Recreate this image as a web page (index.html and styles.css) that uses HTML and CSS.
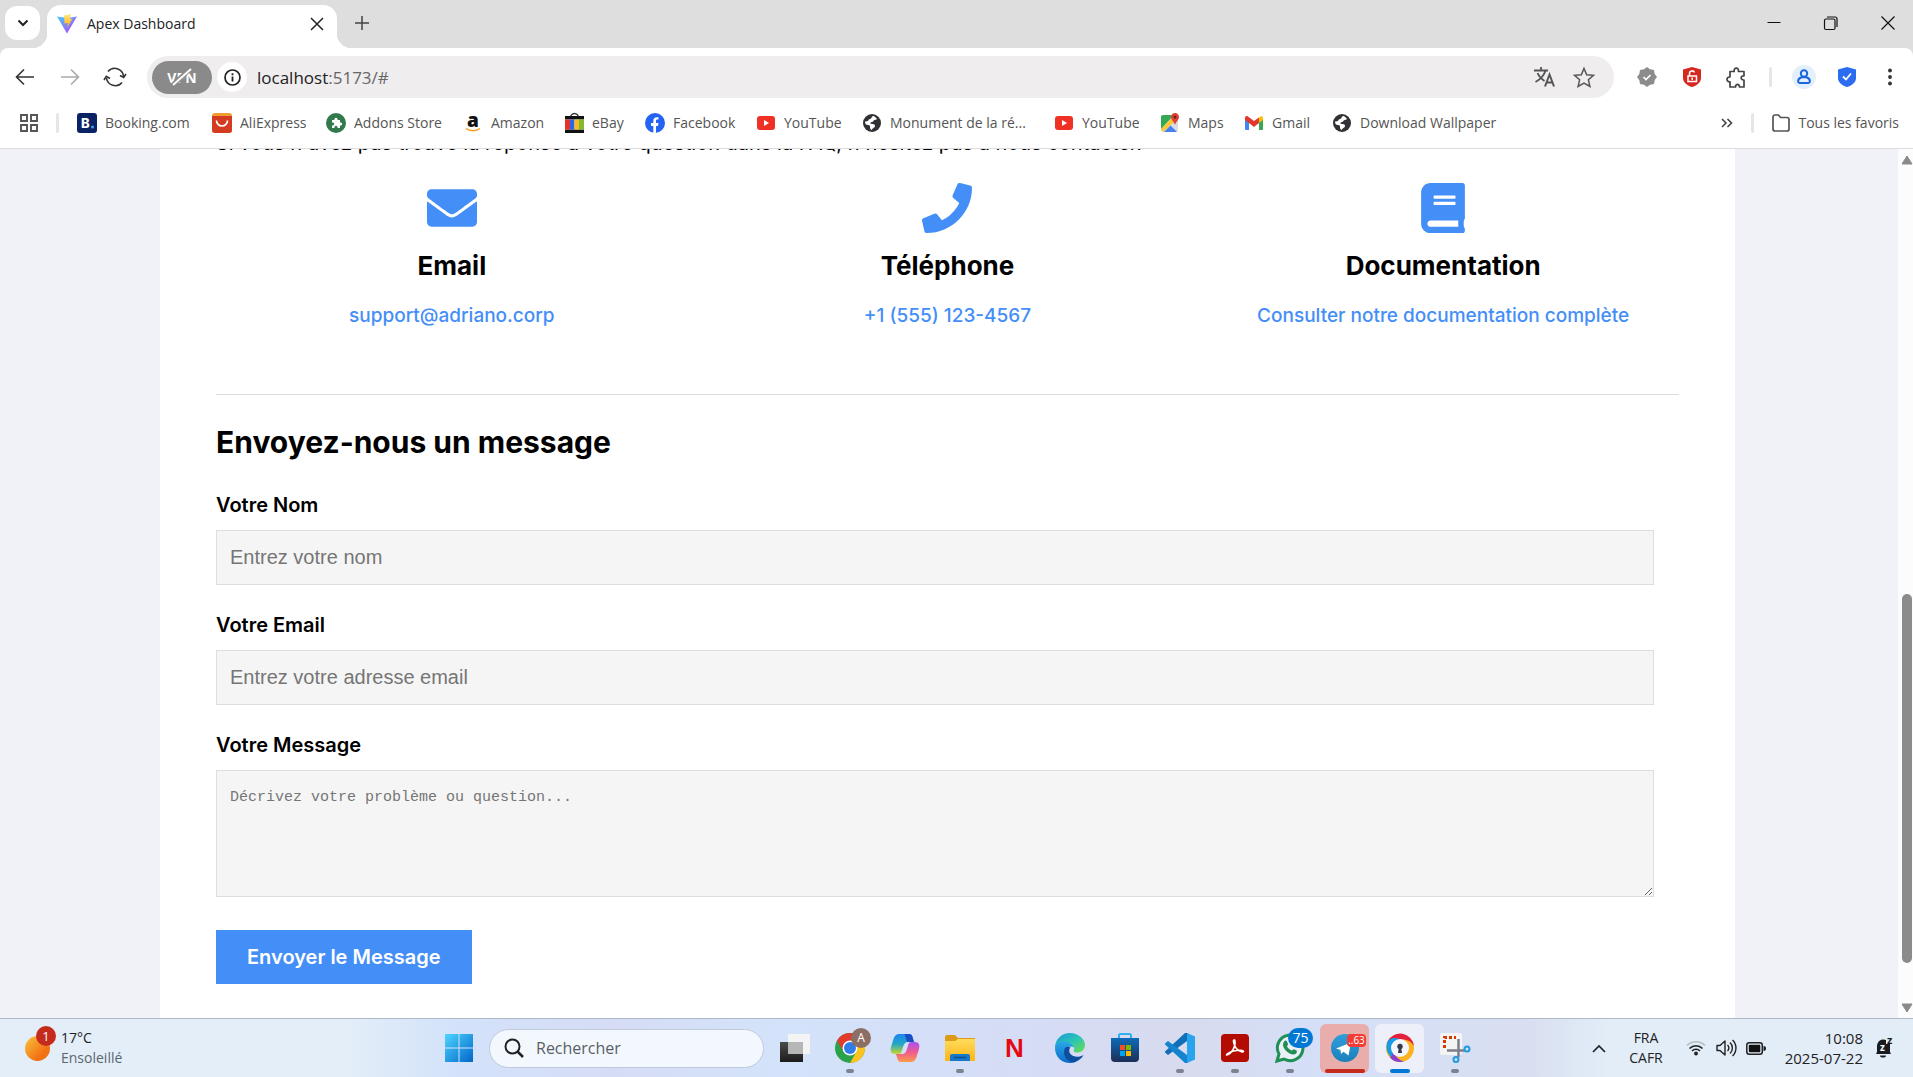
FILE: index.html
```html
<!DOCTYPE html>
<html lang="fr">
<head>
<meta charset="utf-8">
<title>Apex Dashboard</title>
<link rel="stylesheet" href="styles.css">
</head>
<body>
<svg class="defs" width="0" height="0" aria-hidden="true">
  <defs>
    <linearGradient id="vite" x1="0" y1="0" x2="1" y2="1"><stop offset="0" stop-color="#41d1ff"/><stop offset="1" stop-color="#bd34fe"/></linearGradient>
    <linearGradient id="bolt" x1="0" y1="0" x2="0" y2="1"><stop offset="0" stop-color="#ffea83"/><stop offset="1" stop-color="#ffa800"/></linearGradient>
    <linearGradient id="win" x1="0" y1="0" x2="1" y2="1"><stop offset="0" stop-color="#4fd4ff"/><stop offset="1" stop-color="#0067c9"/></linearGradient>
    <linearGradient id="sun" x1="0" y1="0" x2="1" y2="1"><stop offset="0" stop-color="#f8c53a"/><stop offset=".7" stop-color="#f37215"/></linearGradient>
    <linearGradient id="dark" x1="0" y1="0" x2="0" y2="1"><stop offset="0" stop-color="#4a4a4a"/><stop offset="1" stop-color="#1c1c1c"/></linearGradient>
    <linearGradient id="folder" x1="0" y1="0" x2="0" y2="1"><stop offset="0" stop-color="#ffdc5c"/><stop offset="1" stop-color="#fbb616"/></linearGradient>
    <linearGradient id="copA" x1="0" y1="0" x2="0" y2="1"><stop offset="0" stop-color="#1f86f0"/><stop offset=".5" stop-color="#21a6c8"/><stop offset="1" stop-color="#c8d82a"/></linearGradient>
    <linearGradient id="copB" x1="0" y1="0" x2="0" y2="1"><stop offset="0" stop-color="#a552f4"/><stop offset=".5" stop-color="#f05a8e"/><stop offset="1" stop-color="#fb9a4a"/></linearGradient>
    <linearGradient id="edgeTop" x1="0" y1="0" x2="1" y2="1"><stop offset="0" stop-color="#1897d8"/><stop offset=".5" stop-color="#2bc3b8"/><stop offset="1" stop-color="#6be14a"/></linearGradient>
    <linearGradient id="edgeLow" x1="0" y1="0" x2="0" y2="1"><stop offset="0" stop-color="#2aa8e8"/><stop offset="1" stop-color="#0b6cc8"/></linearGradient>
    <linearGradient id="store" x1="0" y1="0" x2="0" y2="1"><stop offset="0" stop-color="#0f6ab8"/><stop offset="1" stop-color="#1c2f57"/></linearGradient>
    <linearGradient id="tele" x1="0" y1="0" x2="0" y2="1"><stop offset="0" stop-color="#2f9fdc"/><stop offset="1" stop-color="#1a80bb"/></linearGradient>
    <symbol id="i-youtube" viewBox="0 0 20 20"><rect x="1" y="3" width="18" height="14" rx="3" fill="#ee3124"/><path d="M8 7l5 3-5 3z" fill="#fff"/></symbol>
    <symbol id="i-globe" viewBox="0 0 20 20"><circle cx="10" cy="10" r="9" fill="#303135"/><path d="M11 3c-2 1-1 2.500-3 3-2 .3-1 2-3 2.200L3 8.500C3 11 4 12 6 12c2 0 2 1 2 2s0 2.500 2 3c0-2 3-2 3-4s-2-2-4-2.200c-1.500-.3 0-1.800 1-1.800 1.500 0 1-1.500 2.500-2 1.500-.5 1.500 0 2.500-1C14 4.500 12.500 3.200 11 3z" fill="#fff"/></symbol>
  </defs>
</svg>

<header class="browser">
  <div class="tabstrip">
    <button class="tab-search" aria-label="Rechercher dans les onglets"><svg width="12" height="8" viewBox="0 0 12 8"><path d="M1.500 1.500L6 6l4.500-4.500" fill="none" stroke="#222" stroke-width="2"/></svg></button>
    <div class="tab">
      <svg width="20" height="20" viewBox="0 0 20 20"><path d="M0 2.500L10 19.500 20 2.500 11 4z" fill="url(#vite)"/><path d="M7 1.500L14 0l-1 5 2.500-.3L10 14l.8-5L7.500 9.500z" fill="url(#bolt)"/></svg>
      <span class="tab-title">Apex Dashboard</span>
      <button class="bare" aria-label="Fermer l'onglet"><svg width="14" height="14" viewBox="0 0 14 14"><path d="M1 1l12 12M13 1L1 13" stroke="#222" stroke-width="1.500"/></svg></button>
    </div>
    <button class="bare new-tab" aria-label="Nouvel onglet"><svg width="14" height="14" viewBox="0 0 14 14"><path d="M7 0v14M0 7h14" stroke="#444" stroke-width="1.500"/></svg></button>
    <div class="window-controls">
      <button class="bare" aria-label="Réduire"><svg width="14" height="14" viewBox="0 0 14 14"><path d="M.5 6.500h13" stroke="#111"/></svg></button>
      <button class="bare" aria-label="Restaurer"><svg width="14" height="14" viewBox="0 0 14 14"><rect x=".5" y="3" width="10.500" height="10.500" rx="1.500" fill="none" stroke="#111" stroke-width="1.200"/><path d="M3 1h8a2 2 0 0 1 2 2v8" fill="none" stroke="#111" stroke-width="1.200"/></svg></button>
      <button class="bare" aria-label="Fermer"><svg width="14" height="14" viewBox="0 0 14 14"><path d="M.5.5l13 13M13.500.5l-13 13" stroke="#111" stroke-width="1.200"/></svg></button>
    </div>
  </div>

  <div class="toolbar">
    <button class="bare tool" aria-label="Retour"><svg width="20" height="18" viewBox="0 0 20 18"><path d="M19 9H2M9 1.500L1.500 9 9 16.500" fill="none" stroke="#333" stroke-width="1.600"/></svg></button>
    <button class="bare tool" aria-label="Suivant"><svg width="20" height="18" viewBox="0 0 20 18"><path d="M1 9h17M11 1.500L18.500 9 11 16.500" fill="none" stroke="#aaa" stroke-width="1.600"/></svg></button>
    <button class="bare tool" aria-label="Actualiser"><svg width="24" height="20" viewBox="0 0 24 20"><path d="M5 4.500A8.800 8.800 0 0 1 20.500 9M3.500 11A8.800 8.800 0 0 0 19 15.500" fill="none" stroke="#333" stroke-width="1.600"/><path d="M17 8.500l3.700 2L23 7M1 13l2.300-3.700L7 11.500" fill="none" stroke="#333" stroke-width="1.600"/></svg></button>
    <div class="address">
      <button class="vpn" aria-label="VPN désactivé">VPN<svg class="vpn-slash" width="22" height="20" viewBox="0 0 22 20"><path d="M2 18L19 2" stroke="#8a8a8a" stroke-width="5"/><path d="M2 18L20 2" stroke="#fff" stroke-width="2"/></svg></button>
      <button class="site-info" aria-label="Informations sur le site"><svg width="17" height="17" viewBox="0 0 17 17"><circle cx="8.500" cy="8.500" r="7.500" fill="none" stroke="#222" stroke-width="1.700"/><path d="M8.500 7.500v5M8.500 4.300v1.900" stroke="#222" stroke-width="1.800"/></svg></button>
      <span class="url">localhost<span class="url-rest">:5173/#</span></span>
      <button class="bare tool-tight" aria-label="Traduire"><svg width="21" height="20" viewBox="0 0 21 20"><path d="M0 3.500h14M7 0v3.500M11.500 3.500C10 9 6 12.500 1.500 15M3.500 6c1.500 3.500 4 6 7 8" fill="none" stroke="#555" stroke-width="1.800"/><path d="M11 19.500l4.500-12 4.500 12M12.500 15.500h6" fill="none" stroke="#555" stroke-width="2"/></svg></button>
      <button class="bare tool-tight" aria-label="Ajouter aux favoris"><svg width="22" height="21" viewBox="0 0 22 21"><path d="M11 1.500l2.700 6.200 6.800.6-5.100 4.500 1.500 6.600L11 16l-5.900 3.400 1.500-6.600L1.500 8.300l6.800-.6z" fill="none" stroke="#555" stroke-width="1.500"/></svg></button>
    </div>
    <button class="bare tool" aria-label="Extension vérifiée"><svg width="20" height="20" viewBox="0 0 20 20"><path d="M10 0l3 2.300L17 3l.7 4L20 10l-2.300 3-.7 4-4 .7L10 20l-3-2.300L3 17l-.7-4L0 10l2.300-3L3 3l4-.7z" fill="#8c8c8c"/><path d="M6.500 10l2.500 2.500L13.500 8" fill="none" stroke="#fff" stroke-width="1.700"/></svg></button>
    <button class="bare tool" aria-label="Bloqueur"><svg width="18" height="20" viewBox="0 0 18 20"><path d="M9 0l9 2.500V11c0 4.500-4.500 7.800-9 9-4.500-1.200-9-4.500-9-9V2.500z" fill="#d5281f"/><rect x="5" y="9" width="8.500" height="5.500" fill="none" stroke="#fff" stroke-width="1.500"/><path d="M6.500 9V6.500a2.600 2.600 0 0 1 5-1M9.200 10.500v2.500" fill="none" stroke="#fff" stroke-width="1.500"/></svg></button>
    <button class="bare tool" aria-label="Extensions"><svg width="21" height="21" viewBox="0 0 21 21"><path d="M4 4.500h4.200c-1-4.500 5.200-4.500 4.200 0H18v4.300c-3.800-.4-3.800 4.500 0 4.200V20h-4.500c.3-3.400-4.200-3.400-4 0H4v-5.200C0 15 0 9.800 4 10z" fill="none" stroke="#444" stroke-width="1.700" stroke-linejoin="round"/></svg></button>
    <span class="divider"></span>
    <button class="bare tool" aria-label="Profil"><svg width="24" height="24" viewBox="0 0 24 24"><circle cx="12" cy="12" r="12" fill="#e4effc"/><circle cx="12" cy="8.500" r="3.200" fill="none" stroke="#1a66e0" stroke-width="2"/><path d="M9.500 12.200C5 14 5.500 18 8 18h8c2.500 0 3-4-1.500-5.800z" fill="none" stroke="#1a66e0" stroke-width="2"/></svg></button>
    <button class="bare tool" aria-label="Protection"><svg width="18" height="20" viewBox="0 0 18 20"><path d="M9 0l9 2.500V11c0 4.500-4.500 7.800-9 9-4.500-1.200-9-4.500-9-9V2.500z" fill="#2b6cf0"/><path d="M5 9.500l3 3L13 6.500" fill="none" stroke="#fff" stroke-width="1.800"/></svg></button>
    <button class="bare tool" aria-label="Menu"><svg width="4" height="18" viewBox="0 0 4 18"><g fill="#333"><circle cx="2" cy="2.500" r="1.900"/><circle cx="2" cy="9" r="1.900"/><circle cx="2" cy="15.500" r="1.900"/></g></svg></button>
  </div>

  <nav class="bookmarks">
    <button class="bare apps" aria-label="Applications"><svg width="18" height="18" viewBox="0 0 18 18"><path d="M1 1h6v6H1zM11 1h6v6h-6zM1 11h6v6H1zM11 11h6v6h-6z" fill="none" stroke="#555" stroke-width="1.900"/></svg></button>
    <span class="divider"></span>
    <div class="bookmark-list">
      <a href="#"><svg width="20" height="20" viewBox="0 0 20 20"><rect width="20" height="20" rx="3" fill="#0b2265"/><text x="4" y="15" font-family="Inter" font-weight="800" font-size="13" fill="#fff">B</text><circle cx="15.500" cy="14" r="1.500" fill="#3aa5f0"/></svg>Booking.com</a>
      <a href="#"><svg width="20" height="20" viewBox="0 0 20 20"><rect width="20" height="20" rx="3" fill="#f29b30"/><path d="M0 3h20v14a3 3 0 0 1-3 3H3a3 3 0 0 1-3-3z" fill="#d43c22"/><path d="M4.500 7.500a5.500 5.500 0 0 0 11 0" fill="none" stroke="#fff" stroke-width="1.700"/></svg>AliExpress</a>
      <a href="#"><svg width="20" height="20" viewBox="0 0 20 20"><circle cx="10" cy="10" r="10" fill="#327a4b"/><path d="M6 7h2.500a1.600 1.600 0 1 1 3 0H14v2.500a1.600 1.600 0 1 1 0 3V15h-2.500a1.600 1.600 0 1 0-3 0H6v-2.500a1.600 1.600 0 1 0 0-3z" fill="#fff"/></svg>Addons Store</a>
      <a href="#"><svg width="18" height="20" viewBox="0 0 18 20"><text x="2" y="14" font-family="Open Sans" font-weight="800" font-size="19" fill="#111">a</text><path d="M1 15.500c4 3 10 3 14 0" fill="none" stroke="#f79a1e" stroke-width="1.500"/></svg>Amazon</a>
      <a href="#"><svg width="19" height="20" viewBox="0 0 19 20"><path d="M5.500 5a4 4.500 0 0 1 8 0" fill="none" stroke="#333" stroke-width="1.500"/><path d="M0 3h19v3.500H0zM0 16.500h19V20H0z" fill="#111"/><path d="M0 6.500h5v10H0z" fill="#e1322c"/><path d="M5 6.500h4.500v10H5z" fill="#2a66e0"/><path d="M9.500 6.500H14v10H9.500z" fill="#f7b926"/><path d="M14 6.500h5v10h-5z" fill="#86b92e"/></svg>eBay</a>
      <a href="#"><svg width="20" height="20" viewBox="0 0 20 20"><circle cx="10" cy="10" r="10" fill="#2563f4"/><path d="M8.300 20v-7H6v-3h2.300V8c0-2.600 1.400-3.800 3.500-3.800.9 0 1.700.1 1.700.1v2.300h-1.200c-1 0-1.300.6-1.300 1.300V10h2.500l-.5 3h-2v7z" fill="#fff"/></svg>Facebook</a>
      <a href="#"><svg width="20" height="20"><use href="#i-youtube"/></svg>YouTube</a>
      <a href="#"><svg width="20" height="20"><use href="#i-globe"/></svg>Monument de la ré...</a>
      <a href="#"><svg width="20" height="20"><use href="#i-youtube"/></svg>YouTube</a>
      <a href="#"><svg width="20" height="20" viewBox="0 0 20 20"><rect x="1" y="2" width="17" height="17" rx="2" fill="#d9dde3"/><path d="M1 4a2 2 0 0 1 2-2h11L1 16z" fill="#36a853"/><path d="M1 16L13 4l2 4L3 19z" fill="#fcc934"/><path d="M4 19l6.500-6.500L17 19z" fill="#4680f0"/><path d="M15 0c-2.500 0-4 1.800-4 4 0 3 3 4.500 4 8 1-3.500 4-5 4-8 0-2.200-1.500-4-4-4z" fill="#dc4436"/><circle cx="15" cy="4" r="1.500" fill="#7c1a14"/></svg>Maps</a>
      <a href="#"><svg width="20" height="20" viewBox="0 0 20 20"><path d="M1 6l4 3v8H2a1 1 0 0 1-1-1z" fill="#4285f4"/><path d="M19 6l-4 3v8h3a1 1 0 0 0 1-1z" fill="#34a853"/><path d="M15 4.500l1.500-1C18 3 19 4 19 5v2l-4 3z" fill="#fbbc04"/><path d="M1 7V5c0-1.500 1.500-2.500 3-1.500L10 8l5-3.500V10l-5 4-5-4z" fill="#e0382c"/></svg>Gmail</a>
      <a href="#"><svg width="20" height="20"><use href="#i-globe"/></svg>Download Wallpaper</a>
    </div>
    <button class="bare" aria-label="Autres favoris"><svg width="12" height="10" viewBox="0 0 12 10"><path d="M1 1l4 4-4 4M6.500 1l4 4-4 4" fill="none" stroke="#444" stroke-width="1.600"/></svg></button>
    <span class="divider"></span>
    <a class="all-bookmarks" href="#"><svg width="18" height="18" viewBox="0 0 18 18"><path d="M1 3a2 2 0 0 1 2-2h3.500l2 2.500H15a2 2 0 0 1 2 2V15a2 2 0 0 1-2 2H3a2 2 0 0 1-2-2z" fill="none" stroke="#555" stroke-width="1.700"/></svg>Tous les favoris</a>
  </nav>
</header>

<div class="viewport">
  <main class="page">
    <section class="card">
      <p class="intro">Si vous n'avez pas trouvé la réponse à votre question dans la FAQ, n'hésitez pas à nous contacter.</p>
      <div class="contacts">
        <div class="contact">
          <svg width="50" height="50" viewBox="0 0 512 512"><path d="M502.300 190.800c3.900-3.100 9.700-.2 9.700 4.700V400c0 26.500-21.500 48-48 48H48c-26.500 0-48-21.500-48-48V195.600c0-5 5.700-7.800 9.700-4.700 22.400 17.400 52.100 39.500 154.100 113.600 21.100 15.400 56.700 47.800 92.200 47.600 35.700.3 72-32.800 92.300-47.600 102-74.100 131.600-96.300 154-113.700zM256 320c23.200.4 56.600-29.200 73.400-41.400 132.700-96.300 142.800-104.700 173.400-128.700 5.800-4.500 9.200-11.500 9.200-18.900v-19c0-26.500-21.500-48-48-48H48c-26.500 0-48 21.500-48 48v19c0 7.400 3.400 14.300 9.200 18.900 30.600 23.900 40.700 32.400 173.400 128.700 16.800 12.200 50.200 41.800 73.400 41.400z"/></svg>
          <h3>Email</h3>
          <a href="mailto:support@adriano.corp">support@adriano.corp</a>
        </div>
        <div class="contact">
          <svg width="50" height="50" viewBox="0 0 512 512"><path d="M493.400 24.600l-104-24c-11.300-2.600-22.900 3.300-27.500 13.900l-48 112c-4.200 9.800-1.400 21.300 6.900 28l60.600 49.600c-36 76.700-98.900 140.500-177.200 177.200l-49.600-60.600c-6.800-8.300-18.200-11.100-28-6.900l-112 48C3.900 366.500-2 378.100.6 389.400l24 104C27.100 504.200 36.700 512 48 512c256.100 0 464-207.500 464-464 0-11.200-7.700-20.900-18.600-23.400z"/></svg>
          <h3>Téléphone</h3>
          <a href="tel:+15551234567">+1 (555) 123-4567</a>
        </div>
        <div class="contact">
          <svg width="44" height="50" viewBox="0 0 448 512"><path d="M448 360V24c0-13.300-10.700-24-24-24H96C43 0 0 43 0 96v320c0 53 43 96 96 96h328c13.300 0 24-10.700 24-24v-16c0-7.500-3.500-14.300-8.900-18.700-4.200-15.400-4.200-59.300 0-74.700 5.400-4.300 8.900-11.100 8.900-18.600zM128 134c0-3.300 2.700-6 6-6h212c3.300 0 6 2.700 6 6v20c0 3.300-2.700 6-6 6H134c-3.300 0-6-2.700-6-6v-20zm0 64c0-3.300 2.700-6 6-6h212c3.300 0 6 2.700 6 6v20c0 3.300-2.700 6-6 6H134c-3.300 0-6-2.700-6-6v-20zm253.400 250H96c-17.700 0-32-14.300-32-32 0-17.600 14.400-32 32-32h285.400c-1.900 17.100-1.900 46.900 0 64z"/></svg>
          <h3>Documentation</h3>
          <a href="#">Consulter notre documentation complète</a>
        </div>
      </div>
      <form class="message-form">
        <h2>Envoyez-nous un message</h2>
        <div class="field">
          <label for="name">Votre Nom</label>
          <input id="name" type="text" placeholder="Entrez votre nom">
        </div>
        <div class="field">
          <label for="email">Votre Email</label>
          <input id="email" type="email" placeholder="Entrez votre adresse email">
        </div>
        <div class="field">
          <label for="message">Votre Message</label>
          <textarea id="message" placeholder="Décrivez votre problème ou question..."></textarea>
        </div>
        <button class="submit" type="button">Envoyer le Message</button>
      </form>
    </section>
  </main>
  <div class="scrollbar" aria-hidden="true">
    <svg width="12" height="10" viewBox="0 0 12 10"><path d="M6 1l5 8H1z" fill="#8a8a8a" stroke="#8a8a8a" stroke-linejoin="round"/></svg>
    <span class="track-above"></span>
    <span class="thumb"></span>
    <span class="track-below"></span>
    <svg width="12" height="10" viewBox="0 0 12 10"><path d="M6 9L1 1h10z" fill="#8a8a8a" stroke="#8a8a8a" stroke-linejoin="round"/></svg>
  </div>
</div>

<footer class="taskbar">
  <div class="weather">
    <span class="weather-icon"><svg width="25" height="25" viewBox="0 0 25 25"><circle cx="12.500" cy="12.500" r="12.500" fill="url(#sun)"/></svg><span class="weather-badge">1</span></span>
    <div class="two-lines"><span>17°C</span><span class="muted">Ensoleillé</span></div>
  </div>
  <div class="task-center">
    <button class="bare app" aria-label="Démarrer"><svg width="30" height="30" viewBox="0 0 30 30"><path d="M1 1h13.500v13.500H1zM15.500 1H29v13.500H15.500zM1 15.500h13.500V29H1zM15.500 15.500H29V29H15.500z" fill="url(#win)"/></svg></button>
    <label class="search">
      <svg width="20" height="20" viewBox="0 0 20 20"><circle cx="8.500" cy="8.500" r="7" fill="none" stroke="#222" stroke-width="2"/><path d="M13.500 13.500L19 19" stroke="#222" stroke-width="2.500"/></svg>
      <input type="text" placeholder="Rechercher" aria-label="Rechercher">
    </label>
    <button class="bare app" aria-label="Vue des tâches"><svg width="30" height="30" viewBox="0 0 30 30"><path d="M0 9h23v20H0z" fill="url(#dark)"/><path d="M8 1h22v20H8z" fill="#f4f4f4"/><path d="M8 9h15v12H8z" fill="#b6b6b6"/></svg></button>
    <button class="bare app running" aria-label="Chrome"><svg width="30" height="30" viewBox="0 0 30 30"><circle cx="15" cy="15" r="15" fill="#2ba24c"/><path d="M2 7.500A15 15 0 0 1 28 7.500H15l-6.500 11z" fill="#e33b2e"/><path d="M28 7.500A15 15 0 0 1 15 30l6.500-11.500V7.500z" fill="#fcc31e"/><circle cx="15" cy="15" r="7.500" fill="#fff"/><circle cx="15" cy="15" r="6" fill="#2f7de9"/></svg><span class="badge avatar">A</span></button>
    <button class="bare app" aria-label="Copilot"><svg width="30" height="28" viewBox="0 0 30 28"><path d="M15 0h4c2 0 3 1 3.500 3L24 8h-6c-3 0-4 2-5 5l-1.500 5c-1 2-2 2-4 2H5C1 20 0 17 1 13L3.500 5C4.500 2 6 0 10 0z" fill="url(#copA)"/><path d="M14 0h5c2 0 3 1 3.500 3L24 8h-7l-1.500-5C15 1 15 0 14 0z" fill="#1a4fc4"/><path d="M15 28h-4c-2 0-3-1-3.500-3L6 20h6c3 0 4-2 5-5l1.500-5c1-2 2-2 4-2H25c4 0 5 3 4 7l-2.500 8c-1 3-2.500 5-6.500 5z" fill="url(#copB)"/></svg></button>
    <button class="bare app running" aria-label="Explorateur"><svg width="30" height="27" viewBox="0 0 30 27"><path d="M0 2a2 2 0 0 1 2-2h8l3 3h17v6H0z" fill="#dd9a14"/><path d="M0 6h10l3-2h17v22H0z" fill="url(#folder)"/><path d="M5 26v-5a2 2 0 0 1 2-2h16a2 2 0 0 1 2 2v5z" fill="#1678c8"/><path d="M9 22.500h12" stroke="#0b4f90" stroke-width="1.500"/></svg></button>
    <button class="bare app" aria-label="Netflix"><span class="netflix">N</span></button>
    <button class="bare app" aria-label="Edge"><svg width="30" height="30" viewBox="0 0 30 30"><path d="M0 15C0 6 7 0 15 0s15 6 15 12c0 5-4 7.500-8 7.500-3 0-4-1-3-2.500 1-2-1-5-4-5C9 12 4 10 0 15z" fill="url(#edgeTop)"/><path d="M0 15c0-4 4-6.500 9-6.500 5 0 9 3 9.500 6-4-3-8 1-7 6 .8 4.500 5 8 10 7.500C19 29.500 17 30 15 30 7 30 0 24 0 15z" fill="url(#edgeLow)"/><path d="M10 15c-3 6 1 14 9 14.500C24 28 27 25 28.500 22c-4 2.500-10 2.500-13-1-2-2.500-1.500-5 0-6.500-2-1-4-1-5.500.5z" fill="#0d4f9e"/></svg></button>
    <button class="bare app" aria-label="Store"><svg width="30" height="30" viewBox="0 0 30 30"><path d="M9 6V2.500a1.500 1.500 0 0 1 1.500-1.500h9A1.500 1.500 0 0 1 21 2.500V6" fill="none" stroke="#2cb0f0" stroke-width="2"/><path d="M1 5h28v20a4 4 0 0 1-4 4H5a4 4 0 0 1-4-4z" fill="url(#store)"/><path d="M10 12h5v5h-5z" fill="#f25022"/><path d="M16 12h5v5h-5z" fill="#7fba00"/><path d="M10 18h5v5h-5z" fill="#00a4ef"/><path d="M16 18h5v5h-5z" fill="#ffb900"/></svg></button>
    <button class="bare app running" aria-label="VS Code"><svg width="30" height="30" viewBox="0 0 30 30"><path d="M22 8L3 22 0 19.500 0 18.500 20 0 23 0z" fill="#0f6fb8"/><path d="M22 22L3 8 0 10.500 0 11.500 20 30 23 30z" fill="#1484cf"/><path d="M22 0l8 3.500v23L22 30z" fill="#28a4ef"/></svg></button>
    <button class="bare app running" aria-label="Acrobat"><svg width="28" height="28" viewBox="0 0 28 28"><rect width="28" height="28" rx="4" fill="#b30b00"/><path d="M6 21c4-1 9-8 8-14-.3-2-2-1.500-1.500 1C13.500 13 17 17 21 18c2 .3 2-1.500 0-1.600-4-.2-10 .6-14 3-1.500.9-2 1.700-1 1.600z" fill="none" stroke="#fff" stroke-width="1.500"/></svg></button>
    <button class="bare app running" aria-label="WhatsApp"><svg width="30" height="30" viewBox="0 0 30 30"><path d="M2 28l2-7A12.800 12.800 0 1 1 9 26z" fill="#e9f0f7" stroke="#1f8f54" stroke-width="3"/><path d="M9 8.500c1-1.500 2.500-1.500 3 0l1 2.500c.2 1-1 1.500-1 2.200 1 2 2.500 3.500 4.500 4.300 1 .2 1.500-1.500 2.500-1.300l2.500 1.300c1 1 0 4-3 4-5 0-11-6-10.500-10.500z" fill="#1f8f54"/></svg><span class="badge whatsapp-count">75</span></button>
    <button class="bare app telegram" aria-label="Telegram"><svg width="28" height="28" viewBox="0 0 28 28"><circle cx="14" cy="14" r="14" fill="url(#tele)"/><path d="M5 14.500L20 8.500l-2.500 13-5-3.800-2.500 2.300-.5-4z" fill="#fff"/></svg><span class="badge telegram-count">..63</span></button>
    <button class="bare app active" aria-label="Navigateur"><svg width="28" height="28" viewBox="0 0 28 28"><circle cx="14" cy="14" r="14" fill="#fbb320"/><path d="M1.500 7.500A14 14 0 0 1 28 12c-3-5-7-7-14-6.500z" fill="#e5203e"/><path d="M14 5.500C7 7 5 15 10 26A14 14 0 0 1 1.500 7.500C4 4 9 3 14 5.500z" fill="#159be8"/><path d="M4 23.500A14 14 0 0 0 18 27.500c-4-1-8-4-10-9z" fill="#8a3fd0"/><circle cx="14" cy="14" r="9" fill="#f3f5fa"/><circle cx="14" cy="12.500" r="2.700" fill="#333a48"/><path d="M13 13h2l1 6h-4z" fill="#333a48"/></svg></button>
    <button class="bare app running" aria-label="Outil Capture"><svg width="30" height="30" viewBox="0 0 30 30"><rect width="22" height="22" rx="2" fill="#f4f4f4"/><path d="M4.500 15V4.500H16" fill="none" stroke="#d83b01" stroke-width="3" stroke-dasharray="3 2"/><path d="M18.500 6v18M7 17.500h18" stroke="#7b8088" stroke-width="2.500"/><circle cx="16" cy="26.500" r="2.500" fill="none" stroke="#1f9bde" stroke-width="2"/><circle cx="27" cy="16" r="2.500" fill="none" stroke="#1f9bde" stroke-width="2"/></svg></button>
  </div>
  <div class="tray">
    <svg width="14" height="9" viewBox="0 0 14 9"><path d="M1 8l6-6 6 6" fill="none" stroke="#222" stroke-width="1.700"/></svg>
    <div class="two-lines language"><span>FRA</span><span>CAFR</span></div>
    <div class="status">
      <svg width="20" height="16" viewBox="0 0 20 16"><path d="M1 5.500a12.500 12.500 0 0 1 18 0" fill="none" stroke="#b3bcc4" stroke-width="1.500"/><path d="M3.500 8.500a9 9 0 0 1 13 0M6 11a5.600 5.600 0 0 1 8 0" fill="none" stroke="#222" stroke-width="1.600"/><circle cx="10" cy="13.500" r="1.900" fill="#222"/></svg>
      <svg width="20" height="18" viewBox="0 0 20 18"><path d="M1 6.500h3L9 2v14l-5-4.500H1z" fill="none" stroke="#222" stroke-width="1.400" stroke-linejoin="round"/><path d="M11.500 6a4 4 0 0 1 0 6M14 3.500a7.500 7.500 0 0 1 0 11M16.500 1a11 11 0 0 1 0 16" fill="none" stroke="#222" stroke-width="1.400"/></svg>
      <svg width="20" height="13" viewBox="0 0 20 13"><rect x=".8" y=".8" width="15.500" height="11.400" rx="2.500" fill="none" stroke="#222" stroke-width="1.500"/><rect x="2.800" y="2.800" width="11.500" height="7.400" rx="1" fill="#111"/><path d="M17.500 4c2 0 2.500 1 2.500 2.500S19.500 9 17.500 9z" fill="#222"/></svg>
    </div>
    <div class="two-lines clock"><span>10:08</span><span>2025-07-22</span></div>
    <svg width="18" height="20" viewBox="0 0 18 20"><path d="M2 14V8a6.500 6.500 0 0 1 9-6v4h4v8l1 2H1z" fill="#181c20"/><path d="M5 17.500h6a3 2 0 0 1-6 0z" fill="#181c20"/><text x="5" y="13" font-family="Open Sans" font-weight="700" font-size="10" fill="#fff">z</text><text x="12" y="6" font-family="Open Sans" font-weight="700" font-size="11" fill="#181c20">z</text></svg>
  </div>
</footer>
</body>
</html>
```
FILE: styles.css
```css
* { box-sizing: border-box; }

body {
  margin: 0;
  height: 100vh;
  display: flex;
  flex-direction: column;
  overflow: hidden;
  font-family: "Open Sans", "Noto Sans", sans-serif;
  font-size: 14px;
  color: #222;
}

svg { flex: none; display: block; overflow: visible; }
.defs { position: absolute; }
a { color: inherit; text-decoration: none; }

.bare {
  border: 0;
  padding: 0;
  background: none;
  font: inherit;
  display: flex;
  align-items: center;
  justify-content: center;
}

/* Browser chrome */
.browser { background: #dedede; flex: none; }

.tabstrip { display: flex; height: 48px; padding-left: 5px; }

.tab-search {
  width: 35px;
  height: 34px;
  margin: 6px 7px 0 0;
  border: 0;
  border-radius: 12px;
  background: #fff;
  display: flex;
  align-items: center;
  justify-content: center;
}

.tab {
  position: relative;
  display: flex;
  align-items: center;
  width: 290px;
  margin-top: 5px;
  padding: 0 13px 6px 10px;
  gap: 10px;
  border-radius: 14px 14px 0 0;
  background: #fff;
}
.tab::before, .tab::after {
  content: "";
  position: absolute;
  bottom: 0;
  width: 14px;
  height: 14px;
}
.tab::before { right: 100%; background: radial-gradient(circle at 0 0, transparent 14px, #fff 14px); }
.tab::after { left: 100%; background: radial-gradient(circle at 100% 0, transparent 14px, #fff 14px); }
.tab-title { flex: 1; }
.new-tab { width: 50px; height: 46px; }

.window-controls { display: flex; margin: 0 -3px 0 auto; height: 45px; }
.window-controls .bare { width: 57px; }

.toolbar {
  display: flex;
  align-items: center;
  height: 54px;
  padding: 4px 2px 0;
  border-radius: 8px 8px 0 0;
  background: #fff;
}
.tool { width: 45px; height: 40px; }
.divider ~ .tool { width: 43px; }

.address {
  flex: 1;
  display: flex;
  align-items: center;
  height: 42px;
  margin: 0 10px;
  padding: 0 11px 0 5px;
  border-radius: 21px;
  background: #efedee;
}
.vpn {
  position: relative;
  width: 60px;
  height: 33px;
  margin-right: 5px;
  padding: 0;
  border: 0;
  border-radius: 17px;
  background: #8a8a8a;
  color: #fff;
  font: 700 14px "Open Sans", sans-serif;
}
.vpn-slash { position: absolute; left: 19px; top: 6px; }
.site-info {
  width: 30px;
  height: 30px;
  padding: 0;
  border: 0;
  border-radius: 50%;
  background: #fff;
  display: flex;
  align-items: center;
  justify-content: center;
}
.url { flex: 1; margin-left: 10px; font-size: 17px; }
.url-rest { color: #666; }
.tool-tight { width: 39px; height: 40px; }

.divider { flex: none; width: 3px; height: 20px; margin: 0 10px; background: #e6e6e6; border-radius: 2px; }

.bookmarks {
  display: flex;
  align-items: center;
  height: 47px;
  padding: 0 14px 5px 20px;
  border-bottom: 1px solid #dcdcde;
  background: #fff;
  color: #555;
}
.bookmarks .divider { margin: 0 18px; }
.bookmark-list {
  flex: 1;
  display: grid;
  grid-template-columns: 135px 114px 139px 100px 80px 111px 106px 192px 106px 84px 88px 1fr;
}
.bookmarks a { display: flex; align-items: center; gap: 8px; white-space: nowrap; }

/* Web page */
.viewport {
  flex: 1;
  display: flex;
  min-height: 0;
  overflow: hidden;
}
.page {
  flex: 1;
  background: #f0f2f7;
  font-family: Inter, sans-serif;
  font-size: 20px;
  line-height: 24px;
  color: #000;
}
.card {
  min-height: 100vh;
  margin: -22px 163px 0 160px;
  padding: 0 56px;
  background: #fff;
}
.intro { margin: 0 0 24px; line-height: 32px; }

.contacts {
  display: grid;
  grid-template-columns: repeat(3, 1fr);
  gap: 24px;
  padding-bottom: 66px;
  border-bottom: 1px solid #dedede;
}
.contact { display: flex; flex-direction: column; align-items: center; color: #448ef8; font-size: 19px; font-weight: 500; }
.contact svg { fill: #448ef8; }
.contact h3 { margin: 17px 0 22px; font-size: 26px; line-height: 32px; font-weight: 700; color: #000; }

.message-form { padding-right: 25px; }
.message-form h2 { margin: 29px 0 33px; font-size: 30px; line-height: 36px; font-weight: 700; }
.field { display: flex; flex-direction: column; gap: 13px; margin-bottom: 28px; }
.field label { font-weight: 600; }
.field input, .field textarea {
  width: 100%;
  border: 1px solid #dedede;
  border-radius: 0;
  background: #f5f5f5;
  padding: 0 13px;
}
.field input { height: 55px; font: 20px "Liberation Sans", Arial, sans-serif; }
.field textarea { height: 127px; padding-top: 17px; font: 15px/20px "Liberation Mono", monospace; resize: vertical; }
.field ::placeholder { color: #757575; }
.submit {
  height: 54px;
  margin-top: 5px;
  padding: 0 31px;
  border: 0;
  background: #448ef8;
  color: #fff;
  font: 600 20px Inter, sans-serif;
}

.scrollbar {
  flex: none;
  width: 15px;
  padding: 6px 0 5px 3px;
  display: flex;
  flex-direction: column;
  align-items: center;
  background: #fcfcfc;
}
.track-above { flex: 428; }
.thumb { flex: 369; width: 10px; border-radius: 5px; background: #8b8b8b; }
.track-below { flex: 40; }

/* Taskbar */
.taskbar {
  flex: none;
  display: grid;
  grid-template-columns: 1fr auto 1fr;
  align-items: center;
  height: 59px;
  border-top: 1px solid #adb9c8;
  background: linear-gradient(90deg, #e3eef8 0%, #e3eef8 18%, #d3e2fa 24%, #d6dcf6 32%, #d3e3fa 41%, #d6dcf5 55%, #d8dbee 62%, #d4dff8 69%, #d9dff0 80%, #e2edf8 84%, #e2edf8 100%);
}
.two-lines { display: flex; flex-direction: column; line-height: 20px; }
.muted { color: #5c6670; }

.weather { display: flex; align-items: center; gap: 11px; padding-left: 25px; }
.weather-icon { position: relative; }
.weather-badge {
  position: absolute;
  left: 11px;
  top: -10px;
  width: 20px;
  height: 20px;
  border-radius: 50%;
  background: #c42b1c;
  color: #fff;
  font-size: 13px;
  line-height: 20px;
  text-align: center;
}

.task-center { display: flex; align-items: center; }
.app { position: relative; width: 49px; height: 49px; margin: 0 3px; border-radius: 6px; }
.running::after, .telegram::after, .active::after {
  content: "";
  position: absolute;
  bottom: 0;
  width: 8px;
  height: 4px;
  border-radius: 2px;
  background: #7c828f;
}
.telegram { background: #e9aeab; }
.telegram::after { width: 40px; background: #c42b1c; }
.active { background: #edf0f9; }
.active::after { width: 20px; background: #0078d4; }

.search {
  display: flex;
  align-items: center;
  gap: 12px;
  width: 275px;
  height: 39px;
  margin: 0 3px;
  padding: 0 14px;
  border: 1px solid #bfcbdd;
  border-radius: 20px;
  background: #f3f7fe;
}
.search input { flex: 1; min-width: 0; border: 0; padding: 0; background: none; font: 16px "Open Sans", sans-serif; }
.search ::placeholder { color: #5a5f66; }

.netflix { color: #e50914; font: 700 26px "Liberation Sans Narrow", "Liberation Sans", sans-serif; }
.badge { position: absolute; color: #fff; text-align: center; }
.avatar { left: 26px; top: 4px; width: 20px; height: 20px; border-radius: 50%; background: #8d6e63; font-size: 12px; line-height: 20px; }
.whatsapp-count { left: 23px; top: 4px; width: 25px; height: 20px; border-radius: 10px; background: #0078d4; font-size: 14px; line-height: 20px; }
.telegram-count { left: 27px; top: 10px; width: 19px; height: 13px; border-radius: 4px; background: #f23c34; font-size: 10px; line-height: 13px; }

.tray { display: flex; align-items: center; justify-content: flex-end; padding-right: 20px; }
.language { align-items: center; width: 80px; }
.status { display: flex; align-items: center; gap: 10px; }
.clock { align-items: flex-end; width: 97px; margin-right: 12px; font-size: 15px; }
```
